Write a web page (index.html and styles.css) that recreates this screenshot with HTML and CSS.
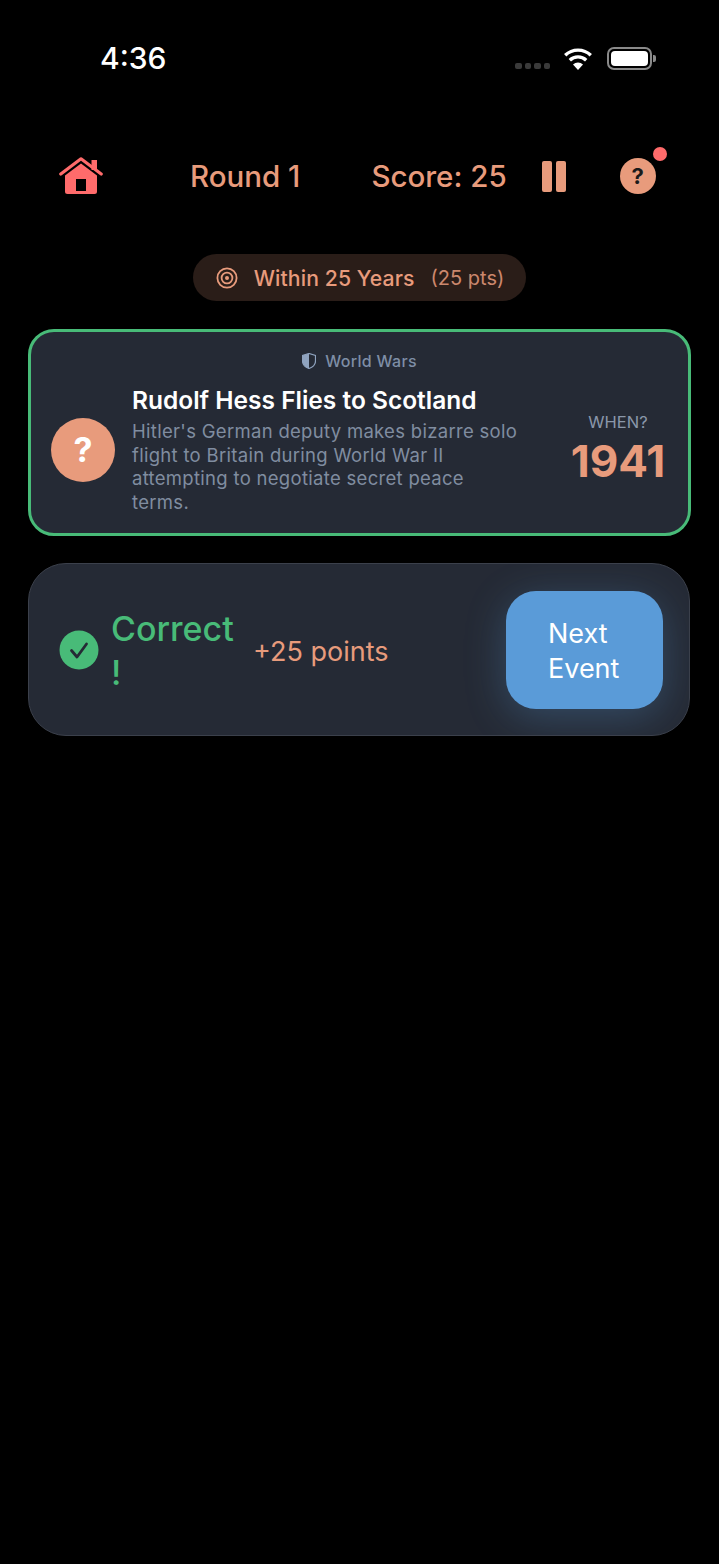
FILE: index.html
```html
<!DOCTYPE html>
<html lang="en">
<head>
    <meta charset="UTF-8">
    <meta name="viewport" content="width=device-width, initial-scale=1.0">
    <title>Round 1</title>
    <link rel="stylesheet" href="styles.css">
</head>
<body>
    <div class="status-bar">
        <div class="status-time">4:36</div>
        <div class="status-icons">
            <div class="signal"><span></span><span></span><span></span><span></span></div>
            <svg class="wifi" width="30" height="23" viewBox="0 0 30 23">
                <path d="M15 23l-5-5.6a7.4 7.4 0 0 1 10 0z" fill="#fff"/>
                <path d="M6.8 13.2a11.9 11.9 0 0 1 16.4 0" fill="none" stroke="#fff" stroke-width="3.4"/>
                <path d="M2.2 8.2a18.6 18.6 0 0 1 25.6 0" fill="none" stroke="#fff" stroke-width="3.4"/>
            </svg>
            <div class="battery"><div class="battery-fill"></div></div>
            <div class="battery-cap"></div>
        </div>
    </div>

    <div class="top-bar">
        <svg class="home-icon" width="44" height="38" viewBox="0 0 44 38">
            <path d="M32.500 3h5.500v10h-5.500z" fill="#ff6b6b"/>
            <path d="M1.800 17L22 1.800 42.200 17" fill="none" stroke="#ff6b6b" stroke-width="3.200" stroke-linecap="round" stroke-linejoin="round"/>
            <path fill-rule="evenodd" d="M22 6.500L38 18.500v16a2.500 2.500 0 0 1-2.500 2.500h-27A2.500 2.500 0 0 1 6 34.500v-16zM17 22v12h10V22z" fill="#ff6b6b"/>
        </svg>
        <div class="round-label">Round 1</div>
        <div class="score-label">Score: 25</div>
        <div class="pause-icon"><span></span><span></span></div>
        <div class="help-btn">?<div class="help-dot"></div></div>
    </div>

    <div class="pill-row">
        <div class="pill">
            <svg width="22" height="22" viewBox="0 0 22 22" fill="none" stroke="#e89b7c" stroke-width="1.800">
                <circle cx="11" cy="11" r="9.600"/>
                <circle cx="11" cy="11" r="5.400"/>
                <circle cx="11" cy="11" r="2" fill="#e89b7c" stroke="none"/>
            </svg>
            <span class="pill-title">Within 25 Years</span>
            <span class="pill-pts">(25 pts)</span>
        </div>
    </div>

    <div class="event-card">
        <div class="event-era">
            <svg width="14" height="16" viewBox="0 0 14 16">
                <path d="M7 .5L13.500 2.500V8c0 3.600-2.800 6.200-6.500 7.500C3.300 14.200.5 11.600.5 8V2.500z" fill="none" stroke="#8fa3bf" stroke-width="1.200"/>
                <path d="M7 .5L.5 2.500V8c0 3.600 2.800 6.200 6.500 7.500z" fill="#8fa3bf"/>
            </svg>
            <span>World Wars</span>
        </div>
        <div class="event-main">
            <div class="event-badge">?</div>
            <div class="event-text">
                <div class="event-title">Rudolf Hess Flies to Scotland</div>
                <div class="event-desc">Hitler's German deputy makes bizarre solo flight to Britain during World War II attempting to negotiate secret peace terms.</div>
            </div>
            <div class="event-when">
                <div class="when-label">WHEN?</div>
                <div class="when-year">1941</div>
            </div>
        </div>
    </div>

    <div class="result-card">
        <div class="result-left">
            <svg class="check-icon" width="40" height="40" viewBox="0 0 40 40">
                <circle cx="20" cy="20" r="19.500" fill="#48bb78"/>
                <path d="M12.500 20.500l5.500 6.500 9.500-13" fill="none" stroke="#252a35" stroke-width="2.800" stroke-linecap="round" stroke-linejoin="round"/>
            </svg>
            <div class="result-word">Correct !</div>
            <div class="result-points">+25 points</div>
        </div>
        <div class="next-btn">Next Event</div>
    </div>
</body>
</html>
```

FILE: styles.css
```css
body {
    font-family: Inter, "Liberation Sans", sans-serif;
    margin: 0;
    height: 1564px;
    overflow: hidden;
    background-color: #000;
    color: #e89b7c;
}

.status-bar {
    display: flex;
    justify-content: space-between;
    align-items: center;
    height: 116px;
    padding: 0 63px 0 100px;
}

.status-time {
    color: #fff;
    font-size: 30px;
    font-weight: 500;
}

.status-icons {
    display: flex;
    align-items: center;
}

.signal {
    display: flex;
    gap: 3px;
    margin-right: 13px;
    margin-top: 16px;
}

.signal span {
    width: 6.500px;
    height: 6.500px;
    border-radius: 2px;
    background: #3a3a3a;
}

.wifi {
    margin-right: 14px;
}

.battery {
    width: 37px;
    height: 15px;
    padding: 2px;
    border: 2px solid #8a8a8a;
    border-radius: 7px;
}

.battery-fill {
    height: 100%;
    background: #fff;
    border-radius: 4px;
}

.battery-cap {
    width: 3px;
    height: 7px;
    margin-left: 1px;
    background: #8a8a8a;
    border-radius: 0 2px 2px 0;
}

.top-bar {
    display: flex;
    align-items: center;
    height: 38px;
    margin-top: 41px;
    padding-left: 59px;
}

.round-label {
    margin-left: 87px;
    font-size: 29.500px;
    font-weight: 500;
}

.score-label {
    margin-left: 71px;
    font-size: 29.500px;
    font-weight: 500;
}

.pause-icon {
    display: flex;
    gap: 4px;
    margin-left: 35px;
}

.pause-icon span {
    width: 10px;
    height: 31px;
    background: #e89b7c;
    border-radius: 2px;
}

.help-btn {
    position: relative;
    width: 36px;
    height: 36px;
    margin-left: 54px;
    border-radius: 50%;
    background: #e89b7c;
    color: #1a1a1a;
    font-size: 22px;
    font-weight: 700;
    line-height: 36px;
    text-align: center;
}

.help-dot {
    position: absolute;
    top: -11px;
    right: -11px;
    width: 14px;
    height: 14px;
    border-radius: 50%;
    background: #ff6b6b;
}

.pill-row {
    display: flex;
    justify-content: center;
    margin-top: 59px;
}

.pill {
    display: flex;
    align-items: center;
    height: 47px;
    padding: 0 22px 0 23px;
    border-radius: 24px;
    background: #2a1d18;
}

.pill-title {
    margin-left: 16px;
    font-size: 21.200px;
    font-weight: 500;
    letter-spacing: 0.1px;
}

.pill-pts {
    margin-left: 16px;
    font-size: 20px;
    opacity: 0.85;
}

.event-card {
    box-sizing: border-box;
    height: 207px;
    margin: 28px 28px 0;
    padding: 19px 20px 0 20px;
    background: #252a35;
    border: 3px solid #48bb78;
    border-radius: 26px;
}

.event-era {
    display: flex;
    justify-content: center;
    align-items: center;
    gap: 9px;
    color: #7e8ea6;
    font-size: 16px;
    font-weight: 500;
    letter-spacing: 0.3px;
}

.event-main {
    display: flex;
    align-items: center;
    margin-top: 14px;
}

.event-badge {
    flex-shrink: 0;
    width: 64px;
    height: 64px;
    border-radius: 50%;
    background: #e89b7c;
    color: #fff;
    font-size: 34px;
    font-weight: 700;
    line-height: 64px;
    text-align: center;
}

.event-text {
    width: 390px;
    margin-left: 17px;
}

.event-title {
    color: #fff;
    font-size: 24.500px;
    font-weight: 600;
}

.event-desc {
    margin-top: 5px;
    color: #808da0;
    font-size: 18.500px;
    line-height: 23.700px;
    letter-spacing: 0.3px;
}

.event-when {
    width: 100px;
    margin-left: auto;
    margin-top: 1px;
    text-align: center;
}

.when-label {
    color: #8a97aa;
    font-size: 16.500px;
}

.when-year {
    margin-top: 2px;
    font-size: 44px;
    font-weight: 700;
}

.result-card {
    box-sizing: border-box;
    display: flex;
    justify-content: space-between;
    align-items: center;
    height: 173px;
    margin: 27px 29px 0 28px;
    padding: 0 26px 0 30px;
    background: #252a35;
    border: 1px solid #3b404b;
    border-radius: 38px;
    overflow: hidden;
}

.result-left {
    display: flex;
    align-items: center;
}

.result-word {
    width: 126px;
    margin-left: 12px;
    margin-top: 2px;
    color: #48bb78;
    font-size: 34px;
    font-weight: 500;
    line-height: 44px;
}

.result-points {
    margin-left: 16px;
    margin-top: 4px;
    font-size: 27px;
}

.next-btn {
    box-sizing: border-box;
    width: 157px;
    height: 118px;
    padding: 25px 42px 0;
    background: #5a9bd8;
    border-radius: 30px;
    box-shadow: 0 8px 40px rgba(90, 155, 216, 0.3);
    color: #fff;
    font-size: 27px;
    line-height: 35px;
}
```
